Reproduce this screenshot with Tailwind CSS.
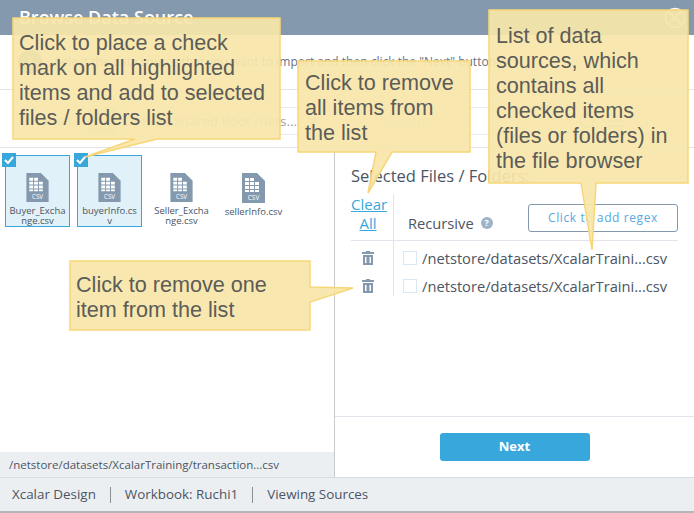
<!DOCTYPE html>
<html lang="en">
<head>
    <meta charset="UTF-8">
    <title>Browse Data Source</title>
    <script src="https://cdn.jsdelivr.net/npm/@tailwindcss/browser@4"></script>
</head>
<body class="bg-white">
<div class="relative w-[694px] h-[513px] overflow-hidden font-['Open_Sans',sans-serif] text-[#4b5563] flex flex-col">

    <!-- Modal header -->
    <div class="h-[35px] shrink-0 bg-[#8499ae] flex items-center justify-between pl-[19px] pr-[8px]">
        <span class="text-[18px] font-semibold text-white">Browse Data Source</span>
        <svg class="w-[22px] h-[22px]" viewBox="0 0 22 22" fill="none" stroke="#fff" stroke-width="1.5"><circle cx="11" cy="11" r="9.5"/><path d="M5 5l12 12M17 5L5 17"/></svg>
    </div>

    <!-- Instructions -->
    <div class="h-[55px] shrink-0 flex items-center gap-[13px] pl-[18px] border-b border-[#e1e4ea]">
        <div class="w-[24px] h-[24px] rounded-full bg-[#8499ae] text-white text-[14px] font-bold flex items-center justify-center">i</div>
        <span class="text-[12px] text-[#6b7280]">Select the data source that you want to import and then click the "Next" button</span>
    </div>

    <!-- Path bar -->
    <div class="h-[58px] shrink-0 border-b border-[#e1e4ea] flex items-start pt-[17px] pl-[20px] pr-[16px]">
        <div class="h-[28px] flex-1 flex items-center border-y border-[#e9ecef] text-[13px] text-[#9ca3af] whitespace-nowrap">
            <span class="w-[68px]">Location</span>
            <div class="w-[28px] h-[26px] bg-[#d4dbd2] flex items-center justify-center"><div class="w-[12px] h-[12px] bg-white"></div></div>
            <span class="ml-[8px] w-[167px] text-[13.5px]">Default Shared Root /nets...</span>
            <div class="ml-[8px] w-[28px] h-[26px] border-x border-[#e9ecef] flex items-center justify-center"><div class="w-0 h-0 border-x-[6px] border-x-transparent border-t-[7px] border-t-[#c8d2da]"></div></div>
            <span class="ml-[54px] w-[154px] text-[14px] text-[#d6dade]">Search</span>
            <div class="h-[26px] w-px bg-[#e9ecef]"></div>
            <svg class="ml-[43px] w-[16px] h-[16px]" viewBox="0 0 16 16" fill="none" stroke="#c8d2da" stroke-width="2"><circle cx="8" cy="8" r="6.5"/></svg>
            <svg class="ml-[13px] w-[16px] h-[12px]" viewBox="0 0 16 12" fill="#c8d2da"><path d="M0 0h16v2H0zM0 5h16v2H0zM0 10h16v2H0z"/></svg>
        </div>
    </div>

    <!-- Body -->
    <div class="flex-1 min-h-0 flex">
        <div class="w-[335px] shrink-0 border-r border-[#c9c9c9] flex flex-col">
            <div class="flex-1 flex gap-[7px] pl-[5px] pt-[7px] text-[9.5px] leading-[10px] text-center">
                <div class="relative w-[65px] h-[72px] bg-[#e0f1f9] border border-[#38a8dc] flex flex-col items-center pt-[17px]">
                    <div class="absolute -left-[4px] -top-[3px] w-[14px] h-[14px] bg-[#38a8dc] flex items-center justify-center"><svg class="w-[10px] h-[10px]" viewBox="0 0 10 10" fill="none" stroke="#fff" stroke-width="2"><path d="M1 5l3 3 5-6"/></svg></div>
                    <svg class="w-[23px] h-[30px]" viewBox="0 0 23 30"><path fill="#8499ae" d="M0 0h15l8 8v22H0z"/><path fill="#fff" d="M3 5h4v3H3zM8 5h4v3H8zM3 9h4v3H3zM8 9h4v3H8zM13 9h4v3h-4zM3 13h4v3H3zM8 13h4v3H8zM13 13h4v3h-4zM3 17h4v2H3zM8 17h4v2H8zM13 17h4v2h-4z"/><text x="11.5" y="27" fill="#fff" font-size="6.5" font-family="Open Sans" text-anchor="middle">CSV</text></svg>
                    <span class="mt-[4px] w-[58px] break-all">Buyer_Exchange.csv</span>
                </div>
                <div class="relative w-[65px] h-[72px] bg-[#e0f1f9] border border-[#38a8dc] flex flex-col items-center pt-[17px]">
                    <div class="absolute -left-[4px] -top-[3px] w-[14px] h-[14px] bg-[#38a8dc] flex items-center justify-center"><svg class="w-[10px] h-[10px]" viewBox="0 0 10 10" fill="none" stroke="#fff" stroke-width="2"><path d="M1 5l3 3 5-6"/></svg></div>
                    <svg class="w-[23px] h-[30px]" viewBox="0 0 23 30"><path fill="#8499ae" d="M0 0h15l8 8v22H0z"/><path fill="#fff" d="M3 5h4v3H3zM8 5h4v3H8zM3 9h4v3H3zM8 9h4v3H8zM13 9h4v3h-4zM3 13h4v3H3zM8 13h4v3H8zM13 13h4v3h-4zM3 17h4v2H3zM8 17h4v2H8zM13 17h4v2h-4z"/><text x="11.5" y="27" fill="#fff" font-size="6.5" font-family="Open Sans" text-anchor="middle">CSV</text></svg>
                    <span class="mt-[4px] w-[58px] break-all">buyerInfo.csv</span>
                </div>
                <div class="relative w-[65px] h-[72px] flex flex-col items-center pt-[17px] border border-transparent">
                    <svg class="w-[23px] h-[30px]" viewBox="0 0 23 30"><path fill="#8499ae" d="M0 0h15l8 8v22H0z"/><path fill="#fff" d="M3 5h4v3H3zM8 5h4v3H8zM3 9h4v3H3zM8 9h4v3H8zM13 9h4v3h-4zM3 13h4v3H3zM8 13h4v3H8zM13 13h4v3h-4zM3 17h4v2H3zM8 17h4v2H8zM13 17h4v2h-4z"/><text x="11.5" y="27" fill="#fff" font-size="6.5" font-family="Open Sans" text-anchor="middle">CSV</text></svg>
                    <span class="mt-[4px] w-[58px] break-all">Seller_Exchange.csv</span>
                </div>
                <div class="relative w-[65px] h-[72px] flex flex-col items-center pt-[17px] border border-transparent">
                    <svg class="w-[23px] h-[30px]" viewBox="0 0 23 30"><path fill="#8499ae" d="M0 0h15l8 8v22H0z"/><path fill="#fff" d="M3 5h4v3H3zM8 5h4v3H8zM3 9h4v3H3zM8 9h4v3H8zM13 9h4v3h-4zM3 13h4v3H3zM8 13h4v3H8zM13 13h4v3h-4zM3 17h4v2H3zM8 17h4v2H8zM13 17h4v2h-4z"/><text x="11.5" y="27" fill="#fff" font-size="6.5" font-family="Open Sans" text-anchor="middle">CSV</text></svg>
                    <span class="mt-[4px] whitespace-nowrap">sellerInfo.csv</span>
                </div>
            </div>
            <div class="h-[25px] bg-[#eceff2] pl-[9px] flex items-center text-[11.5px]">/netstore/datasets/XcalarTraining/transaction...csv</div>
        </div>

        <!-- Selected list -->
        <div class="flex-1 flex flex-col">
            <div class="flex-1 pl-[16px] pr-[16px] pt-[18px]">
                <div class="text-[16.5px] leading-[20px]">Selected Files / Folders:</div>
                <div class="mt-[8px] flex h-[47px] border-b border-[#e1e4ea]">
                    <div class="w-[43px] border-r border-[#e1e4ea] pt-[1px] text-[15px] leading-[19px] text-[#38a8dc] underline pr-[8px] text-center">Clear All</div>
                    <div class="flex-1 flex items-start justify-between pl-[14px]">
                        <div class="flex items-center gap-[7px] mt-[19px] text-[14.7px] leading-[20px]">Recursive <span class="w-[12px] h-[12px] rounded-full bg-[#9fb3c8] text-white text-[9px] font-bold flex items-center justify-center">?</span></div>
                        <div class="mt-[10px] w-[150px] h-[28px] border border-[#8499ae] rounded-[3px] flex items-center justify-center text-[12px] tracking-[0.6px] text-[#56a9df]">Click to add regex</div>
                    </div>
                </div>
                <div class="flex h-[55px]">
                    <div class="w-[43px] border-r border-[#e1e4ea] flex flex-col items-center pr-[9px] pt-[10px] gap-[14px]">
                        <svg class="w-[12px] h-[14px]" viewBox="0 0 12 14" fill="#8499ae"><path d="M4 0h4v1h4v2H0V1h4zM1 4h10v10H1zM3 6v6h1.5V6zM7.5 6v6H9V6z" fill-rule="evenodd"/></svg>
                        <svg class="w-[12px] h-[14px]" viewBox="0 0 12 14" fill="#8499ae"><path d="M4 0h4v1h4v2H0V1h4zM1 4h10v10H1zM3 6v6h1.5V6zM7.5 6v6H9V6z" fill-rule="evenodd"/></svg>
                    </div>
                    <div class="flex-1 pl-[9px] pt-[3px] text-[14.7px] leading-[28px] whitespace-nowrap">
                        <div class="flex items-center gap-[5px]"><span class="w-[14px] h-[14px] border border-[#dbe7f0]"></span>/netstore/datasets/XcalarTraini...csv</div>
                        <div class="flex items-center gap-[5px]"><span class="w-[14px] h-[14px] border border-[#dbe7f0]"></span>/netstore/datasets/XcalarTraini...csv</div>
                    </div>
                </div>
            </div>
            <div class="h-[61px] border-t border-[#e1e4ea] flex items-start justify-center pt-[16px]">
                <div class="w-[150px] h-[28px] bg-[#38a8dc] rounded-[3px] text-white text-[13px] font-bold flex items-center justify-center">Next</div>
            </div>
        </div>
    </div>

    <!-- Status footer -->
    <div class="h-[36px] shrink-0 bg-[#eceff2] border-t border-[#d9dde2] border-b-2 border-b-[#b5b5b5] flex items-center pl-[12px] text-[13.4px]">
        <span>Xcalar Design</span><span class="mx-[14px] h-[16px] w-px bg-[#8a8f96]"></span><span>Workbook: Ruchi1</span><span class="mx-[14px] h-[16px] w-px bg-[#8a8f96]"></span><span>Viewing Sources</span>
    </div>

    <!-- Annotation callouts -->
    <svg class="absolute inset-0 w-[694px] h-[513px]" viewBox="0 0 694 513" fill="#f7e6aa" fill-opacity="0.93" stroke="#f8d677" stroke-width="1.5">
        <path d="M13 18H280V139H157L85 157L135 139H13z"/>
        <path d="M298 61H470V152H392L368 193L376 152H298z"/>
        <path d="M489 10H688V183H596L592 250L581 183H489z"/>
        <path d="M70 261H310V287L353 288L310 302V330H70z"/>
    </svg>
    <div class="absolute left-[19px] top-[30px] w-[258px] font-['Liberation_Sans',sans-serif] text-[21.6px] leading-[25px] text-[#5c5c58]">Click to place a check mark on all highlighted items and add to selected files / folders list</div>
    <div class="absolute left-[305px] top-[70px] w-[160px] font-['Liberation_Sans',sans-serif] text-[21.6px] leading-[25px] text-[#5c5c58]">Click to remove all items from the list</div>
    <div class="absolute left-[496px] top-[23px] w-[180px] font-['Liberation_Sans',sans-serif] text-[21.6px] leading-[25px] text-[#5c5c58]">List of data sources, which contains all checked items (files or folders) in the file browser</div>
    <div class="absolute left-[76px] top-[272px] w-[225px] font-['Liberation_Sans',sans-serif] text-[21.6px] leading-[25px] text-[#5c5c58]">Click to remove one item from the list</div>
</div>
</body>
</html>
